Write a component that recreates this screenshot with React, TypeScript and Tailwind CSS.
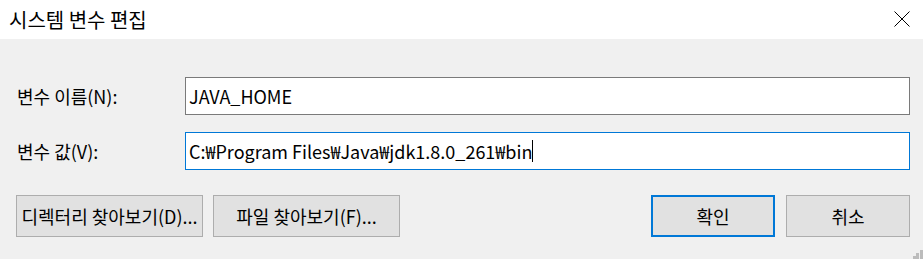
import React from "react";

const font = { fontFamily: '"Noto Sans CJK KR", "Noto Sans", sans-serif' };

function Field({ label, value, focused }: { label: string; value: string; focused?: boolean }) {
  return (
    <div className="flex items-center h-[38px]">
      <label className="w-[185px] shrink-0 pl-[17px] text-[18px] text-black">{label}</label>
      <div
        className={`flex items-center w-[725px] h-[38px] bg-white border px-[3px] text-[18px] text-black ${
          focused ? "border-[#0078d7]" : "border-[#7a7a7a]"
        }`}
      >
        <span>{value}</span>
        {focused && <span className="w-px h-[22px] bg-black" />}
      </div>
    </div>
  );
}

function Btn({ children, primary, w }: { children: React.ReactNode; primary?: boolean; w: string }) {
  return (
    <button
      className={`${w} h-[42px] bg-[#e1e1e1] text-[18px] text-black flex items-center justify-center ${
        primary ? "border-2 border-[#0078d7]" : "border border-[#adadad]"
      }`}
    >
      {children}
    </button>
  );
}

export default function App() {
  return (
    <div className="w-[923px] h-[259px] bg-[#f0f0f0] flex flex-col relative" style={font}>
      <div className="h-[39px] bg-white flex items-center justify-between pl-[9px] pr-[13px]">
        <span className="text-[20px] text-black">시스템 변수 편집</span>
        <svg width="16" height="16" viewBox="0 0 16 16" className="mt-[-1px]">
          <path d="M0.5 0.5L15.5 15.5M15.5 0.5L0.5 15.5" stroke="#000" strokeWidth="1" />
        </svg>
      </div>

      <div className="flex flex-col gap-[17px] mt-[38px]">
        <Field label="변수 이름(N):" value="JAVA_HOME" />
        <Field label="변수 값(V):" value="C:₩Program Files₩Java₩jdk1.8.0_261₩bin" focused />
      </div>

      <div className="flex items-center mt-[25px] pl-[16px] pr-[13px]">
        <Btn w="w-[187px]">디렉터리 찾아보기(D)...</Btn>
        <div className="ml-[10px]">
          <Btn w="w-[187px]">파일 찾아보기(F)...</Btn>
        </div>
        <div className="ml-auto flex gap-[11px]">
          <Btn w="w-[124px]" primary>
            확인
          </Btn>
          <Btn w="w-[124px]">취소</Btn>
        </div>
      </div>

      <svg width="10" height="10" viewBox="0 0 10 10" className="absolute right-0 bottom-0">
        <rect x="7" y="1" width="3" height="3" fill="#bcbcbc" />
        <rect x="3" y="4" width="3" height="3" fill="#bcbcbc" />
        <rect x="7" y="4" width="3" height="3" fill="#bcbcbc" />
        <rect x="0" y="7" width="3" height="3" fill="#bcbcbc" />
        <rect x="3" y="7" width="3" height="3" fill="#bcbcbc" />
        <rect x="7" y="7" width="3" height="3" fill="#bcbcbc" />
      </svg>
    </div>
  );
}
